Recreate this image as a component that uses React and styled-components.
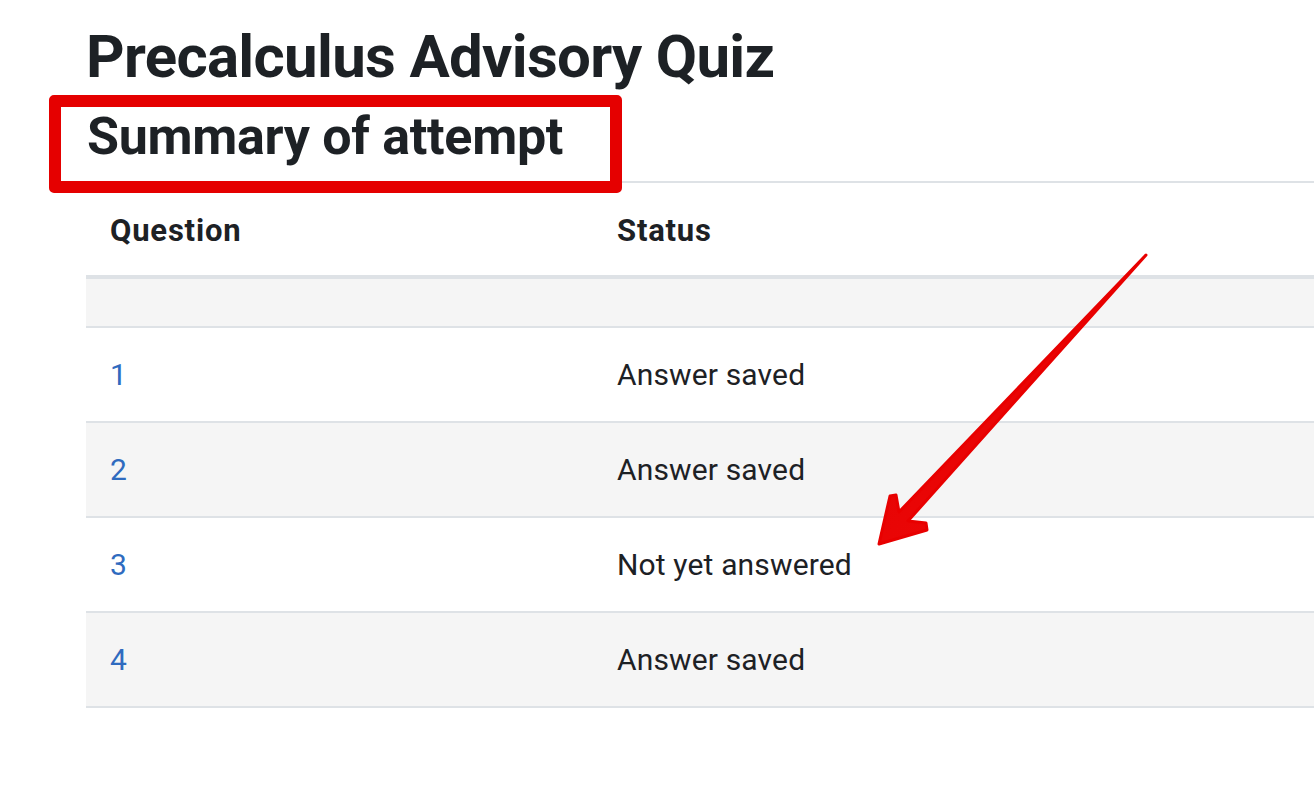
import React from "react";
import styled, { createGlobalStyle } from "styled-components";

const Global = createGlobalStyle`
  html, body { margin: 0; padding: 0; background: #fff; }
  body { font-family: Roboto, "Liberation Sans", Arial, sans-serif; color: #1d2125; }
`;

const Page = styled.div`
  position: relative;
  width: 1314px;
  height: 810px;
  overflow: hidden;
  padding-left: 86px;
  box-sizing: border-box;
`;

const Title = styled.h1`
  margin: 0;
  padding-top: 21px;
  font-size: 60px;
  line-height: 72px;
  font-weight: 700;
  letter-spacing: -0.7px;
`;

const SubWrap = styled.div`
  position: relative;
  margin-top: 14px;
  padding-left: 1px;
`;

const SubTitle = styled.h2`
  margin: 0;
  font-size: 52px;
  line-height: 60px;
  font-weight: 700;
  letter-spacing: -0.3px;
  height: 74px;
  box-sizing: border-box;
`;

const Highlight = styled.div`
  position: absolute;
  left: -37px;
  top: -12px;
  width: 573px;
  height: 98px;
  border: 12px solid #e50000;
  border-radius: 5px;
  box-sizing: border-box;
  pointer-events: none;
  z-index: 2;
`;

const Table = styled.table`
  width: calc(100% + 20px);
  border-collapse: collapse;
  font-size: 30px;
`;

const HeadCell = styled.th`
  text-align: left;
  font-weight: 700;
  font-size: 31px;
  letter-spacing: 0.8px;
  padding: 2px 24px 0;
  height: 90px;
  border-top: 2px solid #dee2e6;
  border-bottom: 4px solid #dee2e6;
  width: ${(p) => p.$w || "auto"};
`;

const Row = styled.tr`
  background: ${(p) => (p.$striped ? "#f5f5f5" : "#fff")};
  border-bottom: 2px solid #dee2e6;
`;

const Cell = styled.td`
  padding: 0 24px;
  height: ${(p) => p.$h || "93px"};
  vertical-align: middle;
  letter-spacing: 0.15px;
`;

const QLink = styled.a`
  color: #2f6bbf;
  text-decoration: none;
`;

const Arrow = styled.svg`
  position: absolute;
  left: 0;
  top: 0;
  pointer-events: none;
`;

const rows = [
  { q: "1", s: "Answer saved" },
  { q: "2", s: "Answer saved" },
  { q: "3", s: "Not yet answered" },
  { q: "4", s: "Answer saved" },
];

export default function App() {
  return (
    <>
      <Global />
      <Page>
        <Title>Precalculus Advisory Quiz</Title>
        <SubWrap>
          <SubTitle>Summary of attempt</SubTitle>
          <Highlight />
        </SubWrap>
        <Table>
          <thead>
            <tr>
              <HeadCell $w="459px">Question</HeadCell>
              <HeadCell>Status</HeadCell>
            </tr>
          </thead>
          <tbody>
            <Row $striped>
              <Cell $h="47px" />
              <Cell $h="47px" />
            </Row>
            {rows.map((r, i) => (
              <Row key={r.q} $striped={i % 2 === 1}>
                <Cell>
                  <QLink href="#">{r.q}</QLink>
                </Cell>
                <Cell>{r.s}</Cell>
              </Row>
            ))}
          </tbody>
        </Table>
        <Arrow width="1314" height="810" viewBox="0 0 1314 810">
          <defs>
            <linearGradient id="ag" x1="0" y1="0" x2="1" y2="1">
              <stop offset="0" stopColor="#e00000" />
              <stop offset="1" stopColor="#f20a0a" />
            </linearGradient>
          </defs>
          <polygon
            points="1146,255 908,521 926,523 927,530 879,544 890,496 896,495 899,512"
            fill="url(#ag)"
            stroke="#e80000"
            strokeWidth="3"
            strokeLinejoin="round"
          />
        </Arrow>
      </Page>
    </>
  );
}
